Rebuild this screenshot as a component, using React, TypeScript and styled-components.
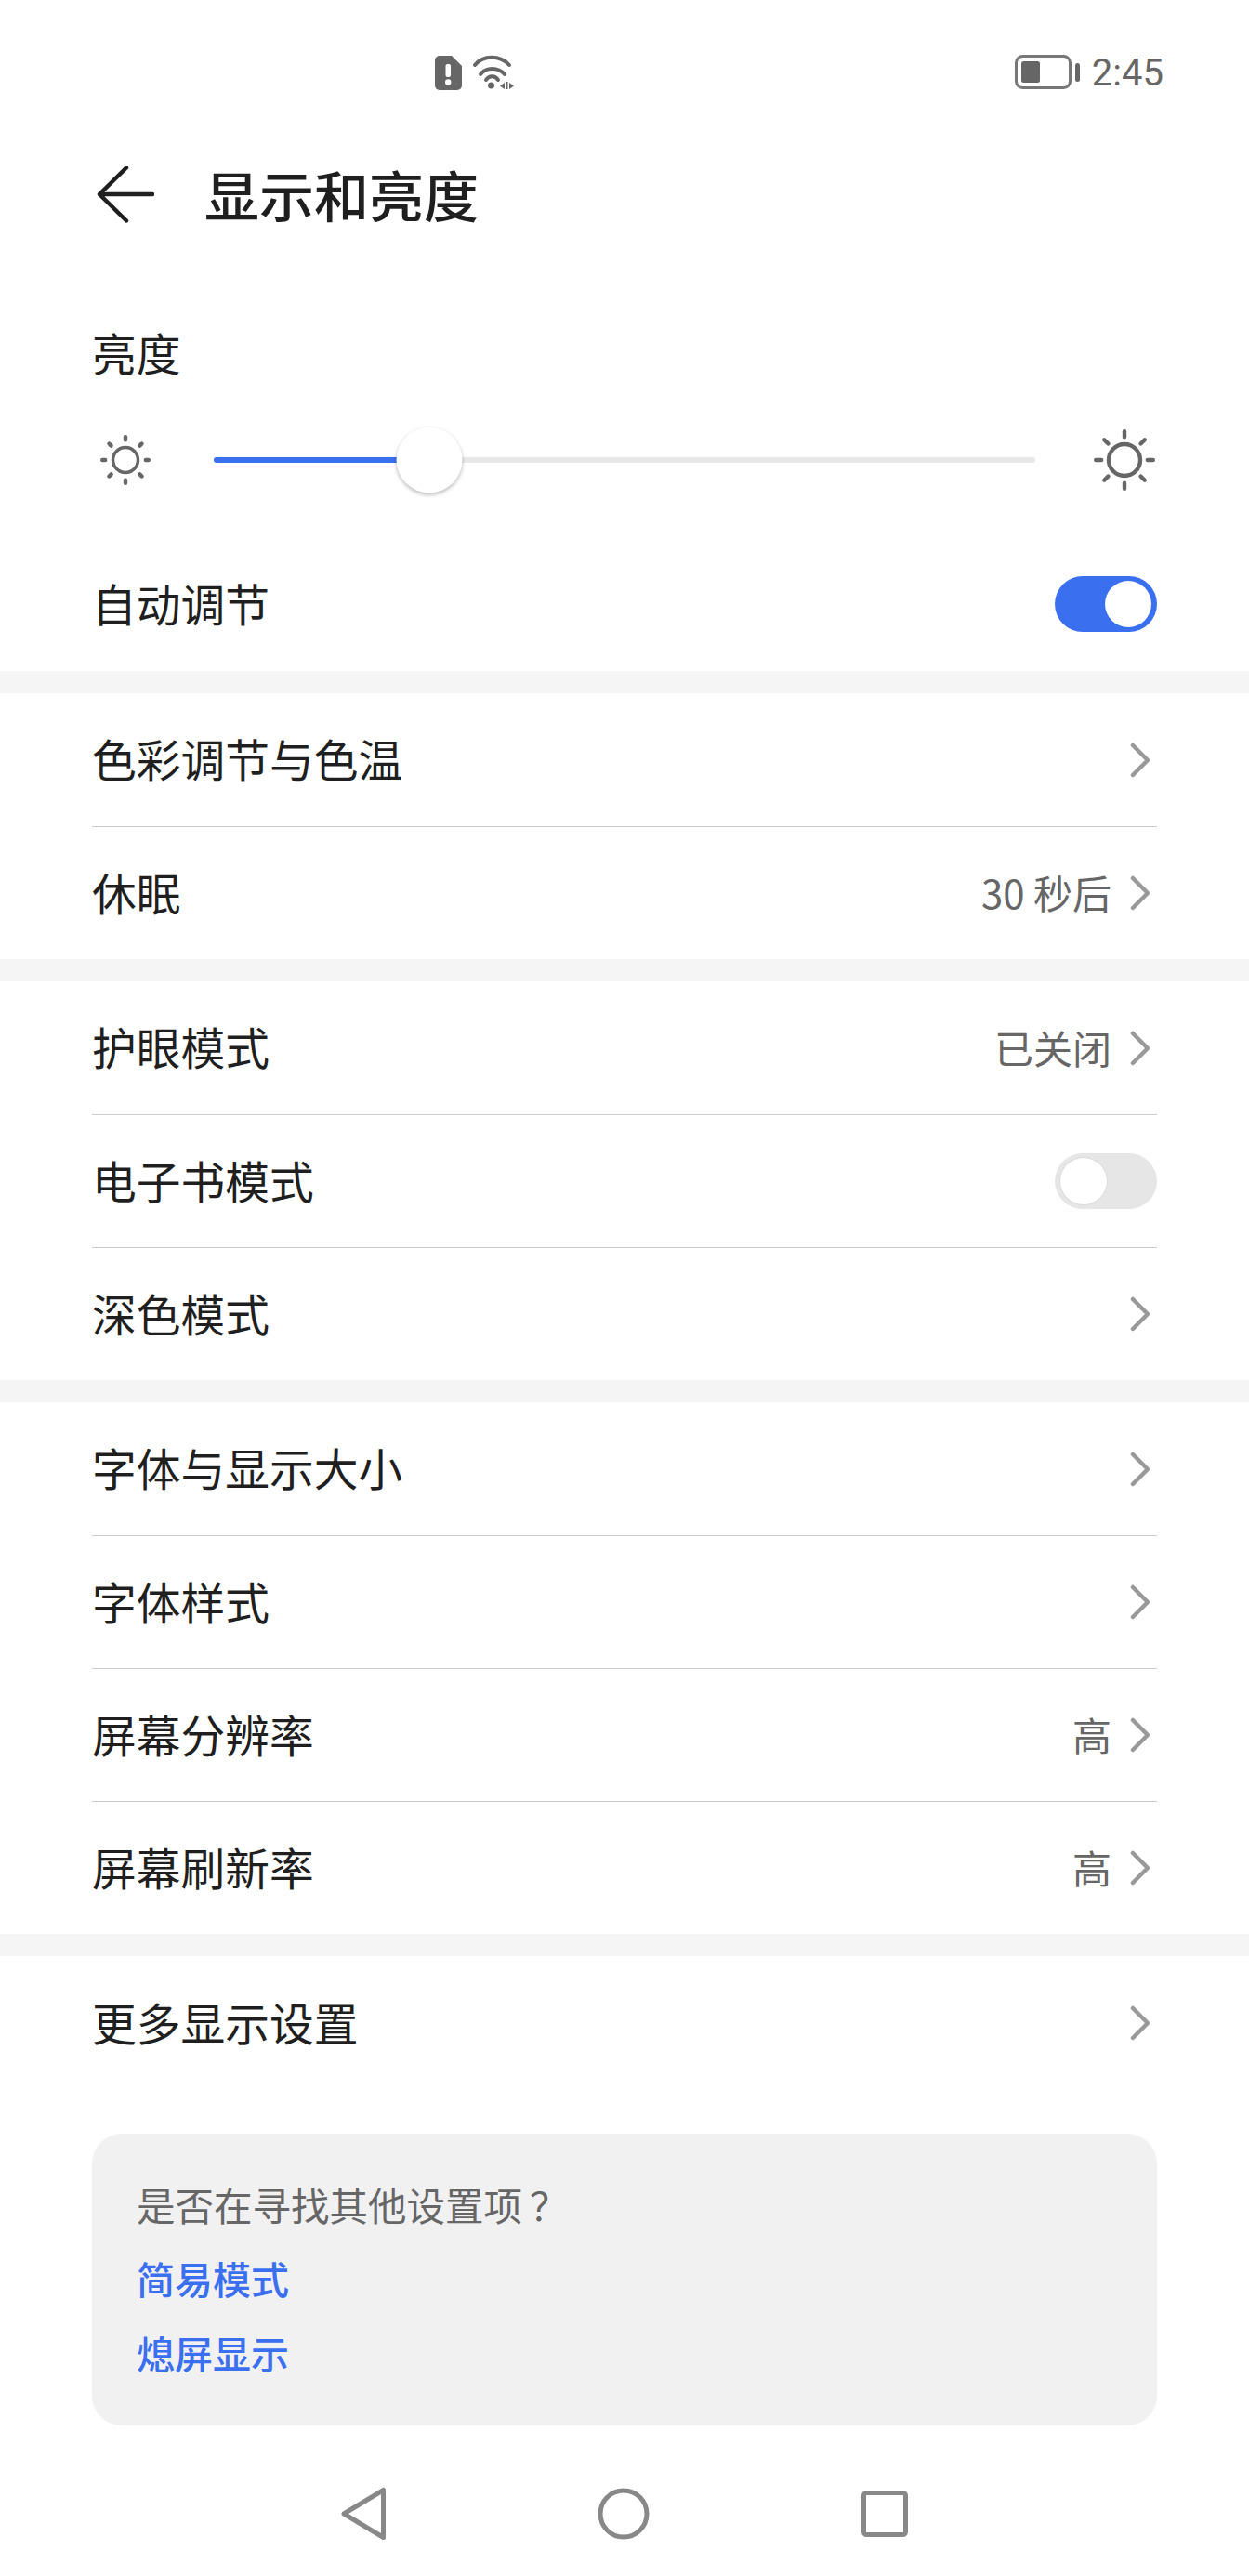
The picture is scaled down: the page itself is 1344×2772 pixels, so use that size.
import React from "react";
import styled, { createGlobalStyle } from "styled-components";

const GlobalStyle = createGlobalStyle`
  html, body {
    margin: 0;
    padding: 0;
    background: #fff;
  }

  body {
    font-family: "Noto Sans CJK SC", "Noto Sans", sans-serif;
  }
`;

const Page = styled.div`
  width: 1344px;
  height: 2772px;
  background: #fff;
  display: flex;
  flex-direction: column;
  overflow: hidden;
`;

const StatusBar = styled.div`
  height: 156px;
  padding: 0 92px 0 468px;
  display: flex;
  align-items: center;
  justify-content: space-between;
  box-sizing: border-box;
`;

const StatusGroup = styled.div<{ $gap: number }>`
  display: flex;
  align-items: center;
  gap: ${(p) => p.$gap}px;
`;

const Clock = styled.span`
  font-family: "Roboto", sans-serif;
  font-size: 40px;
  color: #666;
`;

const Header = styled.div`
  height: 108px;
  padding-left: 104px;
  display: flex;
  align-items: center;
  gap: 54px;
`;

const Title = styled.h1`
  margin: 0;
  padding-bottom: 4px;
  font-size: 59px;
  font-weight: 500;
  line-height: 1;
  color: #1f1f1f;
`;

const BrightnessBlock = styled.div`
  padding: 0 99px;
  margin-top: 83px;
`;

const SectionLabel = styled.div`
  font-size: 47.75px;
  line-height: 64px;
  color: #1f1f1f;
`;

const SliderRow = styled.div`
  margin: 48px 0 47px;
  height: 72px;
  padding-left: 9px;
  display: flex;
  align-items: center;
`;

const Track = styled.div`
  position: relative;
  width: 884px;
  height: 6px;
  margin: 0 63px 0 68px;
  border-radius: 3px;
  background: #e8e8e8;
`;

const TrackFill = styled.div`
  height: 100%;
  border-radius: 3px;
  background: #3a6fef;
`;

const Thumb = styled.div`
  position: absolute;
  top: 50%;
  width: 71px;
  height: 71px;
  border-radius: 50%;
  background: #fff;
  transform: translate(-50%, -50%);
  box-shadow: 0 2px 4px rgba(0, 0, 0, 0.28);
`;

const Band = styled.div`
  height: 24px;
  background: #f5f5f5;
`;

const Group = styled.div`
  padding: 0 99px;
`;

const Row = styled.div<{ $h: number; $last?: boolean }>`
  height: ${(p) => p.$h}px;
  box-sizing: border-box;
  display: flex;
  align-items: center;
  justify-content: space-between;
  border-bottom: ${(p) => (p.$last ? "none" : "1px solid #cdcdcd")};
`;

const RowLabel = styled.span`
  padding-bottom: 4px;
  font-size: 47.75px;
  color: #1f1f1f;
`;

const RowRight = styled.div`
  display: flex;
  align-items: center;
  gap: 20px;
  padding-right: 7px;
`;

const RowValue = styled.span`
  padding-bottom: 3px;
  font-size: 42px;
  color: #666;
`;

const Switch = styled.div<{ $on?: boolean }>`
  width: 110px;
  height: 60px;
  border-radius: 30px;
  box-sizing: border-box;
  padding: 5px 6px;
  display: flex;
  justify-content: ${(p) => (p.$on ? "flex-end" : "flex-start")};
  background: ${(p) => (p.$on ? "#3a6fef" : "#e6e6e6")};
`;

const SwitchKnob = styled.div<{ $on?: boolean }>`
  width: 50px;
  height: 50px;
  border-radius: 50%;
  background: #fff;
  box-shadow: ${(p) => (p.$on ? "none" : "0 0 0 1px #dcdcdc")};
`;

const HintCard = styled.div`
  margin: 47px 99px 0;
  height: 314px;
  box-sizing: border-box;
  padding: 48px 48px 0;
  border-radius: 32px;
  background: #f1f1f2;
`;

const HintText = styled.div`
  font-size: 41.5px;
  line-height: 56px;
  color: #666;
`;

// the question mark sits further from the last character than the font sets it
const HintMark = styled.span`
  margin-left: 8px;
`;

const HintLink = styled.div`
  margin-top: 23px;
  font-size: 41px;
  font-weight: 500;
  line-height: 56px;
  color: #3a6fef;

  & + & {
    margin-top: 24px;
  }
`;

const NavBar = styled.div`
  margin-top: 66px;
  height: 58px;
  display: flex;
  align-items: center;
  justify-content: center;
  gap: 228px;
`;

const Chevron = () => (
  <svg width="22" height="38" viewBox="0 0 22 38" fill="none">
    <path d="M3 3 L19 19 L3 35" stroke="#999" strokeWidth="4.5" strokeLinecap="round" strokeLinejoin="round" />
  </svg>
);

// rays are rotated copies of one tick, stroke widths differ between the two sizes
const Sun = ({ size, r, stroke, ray }: { size: number; r: number; stroke: number; ray: number }) => {
  const c = size / 2;
  return (
    <svg width={size} height={size} viewBox={`0 0 ${size} ${size}`} fill="none" stroke="#666" strokeLinecap="round">
      <circle cx={c} cy={c} r={r} strokeWidth={stroke} />
      {[0, 45, 90, 135, 180, 225, 270, 315].map((a) => (
        <line key={a} x1={c} y1="2.2" x2={c} y2={2.2 + ray} strokeWidth="4.4" transform={`rotate(${a} ${c} ${c})`} />
      ))}
    </svg>
  );
};

const rows = [
  [
    { label: "色彩调节与色温", h: 144 },
    { label: "休眠", value: "30 秒后", h: 142, last: true },
  ],
  [
    { label: "护眼模式", value: "已关闭", h: 144 },
    { label: "电子书模式", h: 143, toggle: true },
    { label: "深色模式", h: 142, last: true },
  ],
  [
    { label: "字体与显示大小", h: 144 },
    { label: "字体样式", h: 143 },
    { label: "屏幕分辨率", value: "高", h: 143 },
    { label: "屏幕刷新率", value: "高", h: 142, last: true },
  ],
];

export default function App() {
  return (
    <Page>
      <GlobalStyle />
      <StatusBar>
        <StatusGroup $gap={11}>
          <svg width="29" height="37" viewBox="0 0 29 37">
            <path d="M5 0 H18 L29 11 V32 a5 5 0 0 1 -5 5 H5 a5 5 0 0 1 -5 -5 V5 a5 5 0 0 1 5 -5 Z" fill="#666" />
            <rect x="11.5" y="9" width="5.5" height="14" rx="2" fill="#fff" />
            <circle cx="14.2" cy="28.5" r="3.2" fill="#fff" />
          </svg>
          <svg width="46" height="38" viewBox="0 0 46 38" fill="none" stroke="#666" strokeWidth="4" strokeLinecap="round">
            <path d="M3 11 C12 0 30 0 40 11" />
            <path d="M9 21 C15 13 28 13 35 21" />
            <path d="M15 27 C18 22 25 22 28 27" />
            <circle cx="20.5" cy="33" r="3.5" fill="#666" stroke="none" />
            <polygon points="30,33.5 35,30 35,37" fill="#666" stroke="none" />
            <rect x="36.5" y="29" width="2" height="8" fill="#666" stroke="none" />
            <polygon points="45,33.5 40,30 40,37" fill="#666" stroke="none" />
          </svg>
        </StatusGroup>
        <StatusGroup $gap={13}>
          <svg width="70" height="38" viewBox="0 0 70 38" fill="none">
            <rect x="1.5" y="1.5" width="58" height="34" rx="7" stroke="#777" strokeWidth="3" />
            <rect x="7" y="7" width="20" height="23" rx="2.5" fill="#666" />
            <rect x="65" y="9" width="5" height="20" rx="2.5" fill="#666" />
          </svg>
          <Clock>2:45</Clock>
        </StatusGroup>
      </StatusBar>

      <Header>
        <svg width="62" height="62" viewBox="0 0 62 62" fill="none" stroke="#1f1f1f" strokeWidth="4.5" strokeLinecap="round" strokeLinejoin="round">
          <path d="M32 1.5 L3 30 L32 58.5 M3 30 H60" />
        </svg>
        <Title>显示和亮度</Title>
      </Header>

      <BrightnessBlock>
        <SectionLabel>亮度</SectionLabel>
        <SliderRow>
          <Sun size={54} r={13.5} stroke={3.5} ray={3} />
          <Track>
            <TrackFill style={{ width: `${(232 / 884) * 100}%` }} />
            <Thumb style={{ left: `${(232 / 884) * 100}%` }} />
          </Track>
          <Sun size={66} r={17} stroke={4.4} ray={6} />
        </SliderRow>
        <Row $h={144} $last>
          <RowLabel>自动调节</RowLabel>
          <Switch $on>
            <SwitchKnob $on />
          </Switch>
        </Row>
      </BrightnessBlock>

      {rows.map((group, i) => (
        <React.Fragment key={i}>
          <Band />
          <Group>
            {group.map((r) => (
              <Row key={r.label} $h={r.h} $last={r.last}>
                <RowLabel>{r.label}</RowLabel>
                {r.toggle ? (
                  <Switch>
                    <SwitchKnob />
                  </Switch>
                ) : (
                  <RowRight>
                    {r.value && <RowValue>{r.value}</RowValue>}
                    <Chevron />
                  </RowRight>
                )}
              </Row>
            ))}
          </Group>
        </React.Fragment>
      ))}
      <Band />
      <Group>
        <Row $h={144} $last>
          <RowLabel>更多显示设置</RowLabel>
          <RowRight>
            <Chevron />
          </RowRight>
        </Row>
      </Group>

      <HintCard>
        <HintText>
          是否在寻找其他设置项<HintMark>？</HintMark>
        </HintText>
        <HintLink>简易模式</HintLink>
        <HintLink>熄屏显示</HintLink>
      </HintCard>

      <NavBar>
        <svg width="48" height="58" viewBox="0 0 48 58" fill="none" stroke="#888" strokeWidth="5" strokeLinejoin="round">
          <path d="M45.5 3.5 V54.5 L3 29 Z" />
        </svg>
        <svg width="56" height="56" viewBox="0 0 56 56" fill="none" stroke="#888" strokeWidth="5">
          <circle cx="28" cy="28" r="25" />
        </svg>
        <svg width="50" height="50" viewBox="0 0 50 50" fill="none" stroke="#888" strokeWidth="5" strokeLinejoin="round">
          <rect x="2.5" y="2.5" width="45" height="45" rx="3" />
        </svg>
      </NavBar>
    </Page>
  );
}
